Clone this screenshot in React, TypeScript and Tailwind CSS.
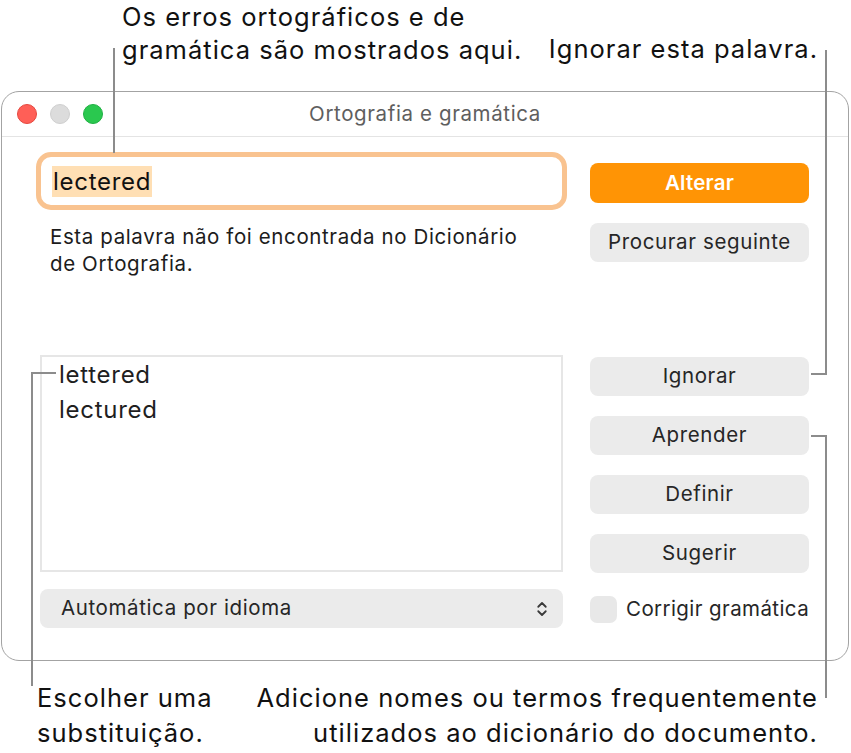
import { ChevronsUpDown } from 'lucide-react';

const lineColor = 'bg-[#8c8c8c]';

function GrayButton({ label, className = '' }: { label: string; className?: string }) {
  return (
    <button
      className={`h-[39px] w-full rounded-[8px] bg-[#ebebeb] text-[20.5px] tracking-[0.03em] text-[#262626] ${className}`}
    >
      {label}
    </button>
  );
}

export default function App() {
  return (
    <div
      className="relative w-[851px] h-[753px] bg-white text-[#1a1a1a] overflow-hidden"
      style={{ fontFamily: 'Inter, "Noto Sans", sans-serif' }}
    >
      {/* top callouts */}
      <div className="h-[91px] flex justify-between text-[25.5px] tracking-[0.04em] leading-[33px] text-[#111]">
        <p className="ml-[122px] whitespace-nowrap">
          Os erros ortográficos e de
          <br />
          gramática são mostrados aqui.
        </p>
        <p className="mr-[33px] pt-[32px] whitespace-nowrap">Ignorar esta palavra.</p>
      </div>

      {/* window */}
      <div className="ml-[1px] w-[848px] h-[570px] border border-[#a3a3a3] rounded-[18px] bg-white flex flex-col">
        <div className="relative h-[45px] border-b border-[#e4e4e4] flex items-center pl-[15px] gap-[13px]">
          <span className="w-[20px] h-[20px] rounded-full bg-[#ff5f57] border border-[#e5483f]" />
          <span className="w-[20px] h-[20px] rounded-full bg-[#dcdcdc] border border-[#cfcfcf]" />
          <span className="w-[20px] h-[20px] rounded-full bg-[#2ac84f] border border-[#20b043]" />
          <div className="absolute inset-0 flex items-center justify-center text-[20.5px] tracking-[0.03em] text-[#5e5e5e]">
            Ortografia e gramática
          </div>
        </div>

        <div className="flex">
          {/* left column */}
          <div className="ml-[34px] w-[531px] flex flex-col">
            <div className="mt-[15px] h-[58px] rounded-[15px] border-[5px] border-[#f9c390] bg-white flex items-center pl-[11px]">
              <span className="bg-[#ffdfb4] text-[24px] tracking-[0.03em] leading-[31px] px-[1px] text-[#111]">
                lectered
              </span>
            </div>
            <p className="mt-[13px] pl-[14px] text-[20.5px] tracking-[0.03em] leading-[27px] text-[#1c1c1c] whitespace-nowrap">
              Esta palavra não foi encontrada no Dicionário
              <br />
              de Ortografia.
            </p>
            <div className="mt-[78px] ml-[4px] w-[523px] h-[217px] border-2 border-[#e6e6e6] pl-[17px] text-[24px] tracking-[0.03em] leading-[35px] text-[#1f1f1f]">
              <div>lettered</div>
              <div>lectured</div>
            </div>
            <div className="mt-[17px] ml-[4px] w-[523px] h-[39px] rounded-[8px] bg-[#ebebeb] flex items-center justify-between pl-[21px] pr-[12px] text-[20.5px] tracking-[0.03em] text-[#262626]">
              <span>Automática por idioma</span>
              <ChevronsUpDown className="w-[18px] h-[18px] text-[#3a3a3a]" strokeWidth={2.4} />
            </div>
          </div>

          {/* right column */}
          <div className="ml-[23px] w-[219px] flex flex-col">
            <button className="mt-[26px] h-[40px] w-full rounded-[8px] bg-[#ff9405] text-[20.5px] tracking-[0.01em] font-semibold text-white">
              Alterar
            </button>
            <GrayButton label="Procurar seguinte" className="mt-[20px]" />
            <GrayButton label="Ignorar" className="mt-[95px]" />
            <GrayButton label="Aprender" className="mt-[20px]" />
            <GrayButton label="Definir" className="mt-[20px]" />
            <GrayButton label="Sugerir" className="mt-[20px]" />
            <label className="mt-[21px] flex items-center gap-[9px] text-[20.5px] tracking-[0.02em] text-[#262626]">
              <span className="w-[27px] h-[27px] shrink-0 rounded-[7px] bg-[#e8e8e8]" />
              <span className="whitespace-nowrap">Corrigir gramática</span>
            </label>
          </div>
        </div>
      </div>

      {/* bottom callouts */}
      <div className="flex justify-between pt-[19px] text-[25.5px] tracking-[0.04em] leading-[35px] text-[#111]">
        <p className="ml-[37px] whitespace-nowrap">
          Escolher uma
          <br />
          substituição.
        </p>
        <p className="mr-[33px] text-right whitespace-nowrap">
          Adicione nomes ou termos frequentemente
          <br />
          utilizados ao dicionário do documento.
        </p>
      </div>

      {/* leader lines */}
      <div className={`absolute left-[113px] top-[48px] w-[2px] h-[105px] ${lineColor}`} />
      <div className={`absolute left-[825px] top-[50px] w-[2px] h-[325px] ${lineColor}`} />
      <div className={`absolute left-[811px] top-[373px] w-[16px] h-[2px] ${lineColor}`} />
      <div className={`absolute left-[811px] top-[435px] w-[16px] h-[2px] ${lineColor}`} />
      <div className={`absolute left-[825px] top-[435px] w-[2px] h-[263px] ${lineColor}`} />
      <div className={`absolute left-[31px] top-[372px] w-[25px] h-[2px] ${lineColor}`} />
      <div className={`absolute left-[31px] top-[372px] w-[2px] h-[314px] ${lineColor}`} />
    </div>
  );
}
